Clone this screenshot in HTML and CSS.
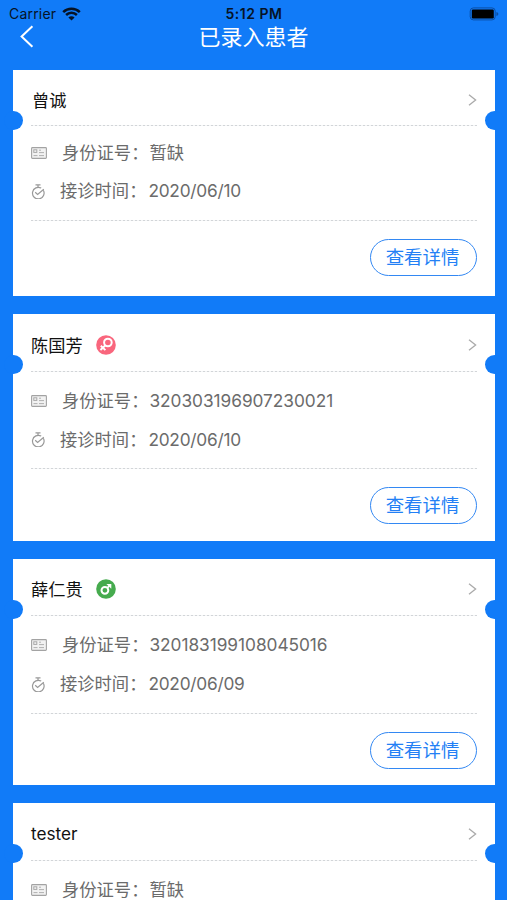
FILE: index.html
```html
<!DOCTYPE html>
<html lang="zh-CN">
<head>
	<meta charset="utf-8">
	<title>已录入患者</title>
	<link rel="stylesheet" href="styles.css">
</head>
<body>
<svg class="defs" width="0" height="0">
  <symbol id="i-card" viewBox="0 0 16 12">
    <rect x="0.6" y="0.6" width="14.8" height="10.8" rx="0.8" fill="#f2f2f2" stroke="#a3a3a3" stroke-width="1.1"/>
    <rect x="2.8" y="2.8" width="3" height="2.6" fill="none" stroke="#a8a8a8"/>
    <path d="M8 3.2h2M8 5.6h5M2.5 8.6h4M8 8.6h5" fill="none" stroke="#a8a8a8" stroke-width="0.9"/>
  </symbol>
  <symbol id="i-watch" viewBox="0 0 14 15">
    <path d="M12.3 6.2A5.8 5.8 0 1 1 10.2 4.1" fill="none" stroke="#999" stroke-width="1.2"/>
    <path d="M4.5 0.9h5M7 1v2.2M4.2 8.3l2.4 2.2 6.2-5.2" fill="none" stroke="#999" stroke-width="1.2"/>
  </symbol>
  <symbol id="i-arrow" viewBox="0 0 9 12">
    <path d="M1 0.8l6.6 5.2L1 11.2" fill="none" stroke="#aaa" stroke-width="1.3"/>
  </symbol>
</svg>

<div class="status">
  <div class="carrier">
    <span>Carrier</span>
    <svg width="19" height="14" viewBox="0 0 19 14">
      <path d="M1.2 5.1a11.8 11.8 0 0 1 16.6 0M4.1 8a7.7 7.7 0 0 1 10.8 0" fill="none" stroke="#061326" stroke-width="2.5"/>
      <path d="M9.5 13.6L6.4 10.5a4.4 4.4 0 0 1 6.2 0z" fill="#061326"/>
    </svg>
  </div>
  <div class="time">5:12 PM</div>
  <div class="battery">
    <svg width="30" height="14" viewBox="0 0 30 14">
      <rect x="1.2" y="0.9" width="25" height="12" rx="3.2" fill="none" stroke="#0b4fa6"/>
      <rect x="2.8" y="2.6" width="22" height="8.8" rx="1.2" fill="#000"/>
      <path d="M27.4 4.9q2 0.6 2 2t-2 2z" fill="#0b4fa6"/>
    </svg>
  </div>
</div>
<div class="nav">
  <a class="back">
    <svg width="14" height="23" viewBox="0 0 14 23"><path d="M12.4 1.2L1.6 11.5l10.8 10.3" fill="none" stroke="#fff" stroke-width="2"/></svg>
  </a>
  <h1>已录入患者</h1>
</div>

<div class="list">
  <div class="card short">
    <div class="head">
      <span class="name">曾诚</span>
      <svg class="arrow"><use href="#i-arrow"/></svg>
    </div>
    <div class="info">
      <div class="row id"><svg><use href="#i-card"/></svg><span>身份证号：</span><b>暂缺</b></div>
      <div class="row date"><svg><use href="#i-watch"/></svg><span>接诊时间：</span><b>2020/06/10</b></div>
    </div>
    <div class="foot"><a class="btn">查看详情</a></div>
  </div>

  <div class="card">
    <div class="head">
      <span class="name">陈国芳</span>
      <svg class="sex" viewBox="0 0 20 20">
        <circle cx="10" cy="10" r="9.8" fill="#f9667d"/>
        <path d="M9.4 10.2l-5 4.8M4.8 10.7l4.6 4.4" fill="none" stroke="#fff" stroke-width="1.9"/>
        <circle cx="11.9" cy="7.5" r="3.8" fill="none" stroke="#fff" stroke-width="2"/>
      </svg>
      <svg class="arrow"><use href="#i-arrow"/></svg>
    </div>
    <div class="info">
      <div class="row id"><svg><use href="#i-card"/></svg><span>身份证号：</span><b>320303196907230021</b></div>
      <div class="row date"><svg><use href="#i-watch"/></svg><span>接诊时间：</span><b>2020/06/10</b></div>
    </div>
    <div class="foot"><a class="btn">查看详情</a></div>
  </div>

  <div class="card">
    <div class="head">
      <span class="name">薛仁贵</span>
      <svg class="sex" viewBox="0 0 20 20">
        <circle cx="10" cy="10" r="9.8" fill="#46ab4e"/>
        <circle cx="8.9" cy="11.3" r="3.4" fill="none" stroke="#fff" stroke-width="2"/>
        <path d="M11 9.2l2.4-2.4" stroke="#fff" stroke-width="1.8"/>
        <path d="M10.4 4.9h4.9v4.9z" fill="#fff"/>
      </svg>
      <svg class="arrow"><use href="#i-arrow"/></svg>
    </div>
    <div class="info">
      <div class="row id"><svg><use href="#i-card"/></svg><span>身份证号：</span><b>320183199108045016</b></div>
      <div class="row date"><svg><use href="#i-watch"/></svg><span>接诊时间：</span><b>2020/06/09</b></div>
    </div>
    <div class="foot"><a class="btn">查看详情</a></div>
  </div>

  <div class="card last">
    <div class="head">
      <span class="name">tester</span>
      <svg class="arrow"><use href="#i-arrow"/></svg>
    </div>
    <div class="info">
      <div class="row id"><svg><use href="#i-card"/></svg><span>身份证号：</span><b>暂缺</b></div>
    </div>
  </div>
</div>
</body>
</html>
```
FILE: styles.css
```css
*{box-sizing:border-box;}
body,h1{margin:0;padding:0;}
body{
  height: 900px;
  overflow: hidden;
  background: #117bf8;
  font-family: Inter, "Noto Sans CJK SC", sans-serif;
}
.defs{
  display: block;
}
.status{
  display: grid;
  grid-template-columns: 1fr auto 1fr;
  align-items: center;
  height: 27px;
  padding: 0 8px 0 9px;
  color: #061326;
  font-size: 14px;
}
.carrier{
  display: flex;
  align-items: center;
  gap: 6px;
  letter-spacing: 0.2px;
}
.time{
  font-weight: 600;
  letter-spacing: 0.5px;
}
.battery{
  display: flex;
  justify-content: flex-end;
}
.nav{
  display: grid;
  grid-template-columns: 60px 1fr 60px;
  height: 20px;
}
.back{
  display: flex;
  margin-top: -2px;
  padding-left: 20px;
}
.nav h1{
  color: #fff;
  font-size: 22px;
  font-weight: 400;
  line-height: 20px;
  text-align: center;
}
.list{
  display: flex;
  flex-direction: column;
  gap: 18px;
  height: 853px;
  padding: 23px 12px 0 13px;
}
.card{
  flex: none;
  position: relative;
  height: 226.4px;
  padding: 0 18px;
  background: #fff;
}
/* ticket notches */
.card:before,
.card:after{
  content: "";
  position: absolute;
  top: 41px;
  width: 19px;
  height: 19px;
  border-radius: 50%;
  background: #117bf8;
}
.card:before{left: -9px;}
.card:after{right: -9px;}
.head,.info{
  background: repeating-linear-gradient(90deg, #d2d5d8 0 2px, #f4f5f6 2px 4px) bottom / 100% 1px no-repeat;
}
.head{
  display: flex;
  align-items: center;
  height: 57.4px;
  padding-bottom: 1px;
}
.name{
  color: #111;
  font-size: 17.2px;
  line-height: 24px;
  padding-top: 6px;
}
.sex{
  width: 20px;
  height: 20px;
  margin: 5px 0 0 13px;
}
.arrow{
  width: 9px;
  height: 12px;
  margin: 5px 0 0 auto;
}
.info{
  padding: 9.6px 0 10px;
}
.row{
  display: flex;
  align-items: center;
  height: 39px;
  color: #6b6b6b;
  font-size: 17.3px;
}
.row span,
.row b{
  line-height: 24px;
}
.row b{
  font-weight: 400;
  margin-left: 1px;
}
.id b{
  letter-spacing: -0.04px;
}
.id svg{
  width: 16px;
  height: 12px;
  margin-right: 15px;
}
.date svg{
  width: 14px;
  height: 15px;
  margin-right: 15px;
}
.date b{
  letter-spacing: -0.25px;
  margin-left: 2px;
}
.foot{
  display: flex;
  justify-content: flex-end;
  padding-top: 18px;
}
.btn{
  width: 107px;
  height: 37px;
  padding-right: 2px;
  border: 1.5px solid #3388f3;
  border-radius: 19px;
  color: #2380f5;
  font-size: 18.4px;
  line-height: 34px;
  text-align: center;
}
.short .head{height: 56px;}
.short .name{padding-left: 1px;}
.short .info{padding-top: 8px;padding-bottom: 11px;}
.short .row{height: 38px;}
.short .row span,
.short .row b{
  padding-bottom: 1px;
}
/* cut off by the bottom of the screen */
.last{
  flex: 1;
  min-height: 0;
  overflow: hidden;
  margin: 0 -12px 0 -13px;
  padding: 0 30px 0 31px;
  background: linear-gradient(#fff, #fff) 13px 0 / calc(100% - 25px) 100% no-repeat;
}
.last:before{left: 4px;}
.last:after{right: 3px;}
```
